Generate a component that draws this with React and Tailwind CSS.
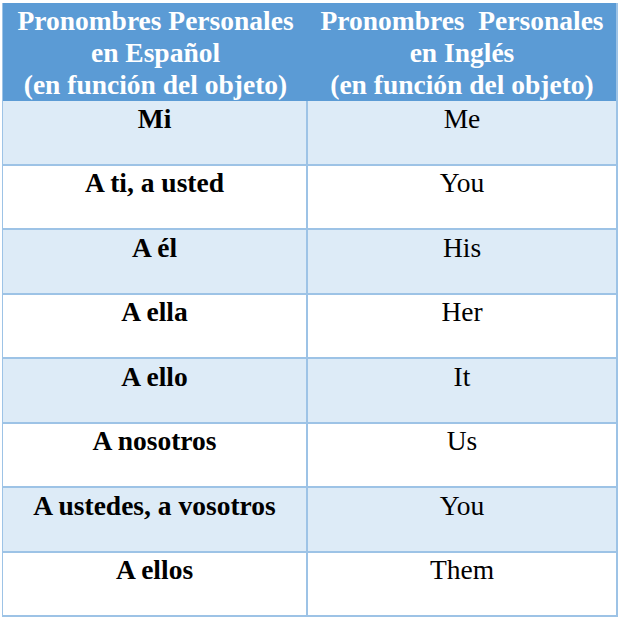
const rows = [
  ["Mi", "Me"],
  ["A ti, a usted", "You"],
  ["A él", "His"],
  ["A ella", "Her"],
  ["A ello", "It"],
  ["A nosotros", "Us"],
  ["A ustedes, a vosotros", "You"],
  ["A ellos", "Them"],
];

export default function App() {
  return (
    <div className="w-[625px] h-[626px] bg-white pt-[3px] pl-[2px] font-['Liberation_Serif',serif] text-[27.5px] leading-[32px]">
      <div className="w-[616px] border-l border-r-2 border-[#9dc3e6]">
        <div className="grid grid-cols-[305px_1fr] h-[98px] pt-[2px] bg-[#5b9bd5] text-white font-bold text-center">
          <div className="whitespace-pre-wrap">
            Pronombres Personales{"\n"}en Español{"\n"}(en función del objeto)
          </div>
          <div className="whitespace-pre-wrap">
            Pronombres  Personales{"\n"}en Inglés{"\n"}(en función del objeto)
          </div>
        </div>
        {rows.map(([es, en], i) => (
          <div
            key={i}
            className={`grid grid-cols-[305px_1fr] h-[64.5px] border-b-2 border-[#9dc3e6] text-black text-center ${
              i % 2 === 0 ? "bg-[#ddebf7]" : "bg-white"
            }`}
          >
            <div className="pt-[1.5px] font-bold border-r-2 border-[#9dc3e6]">{es}</div>
            <div className="pt-[1.5px]">{en}</div>
          </div>
        ))}
      </div>
    </div>
  );
}
